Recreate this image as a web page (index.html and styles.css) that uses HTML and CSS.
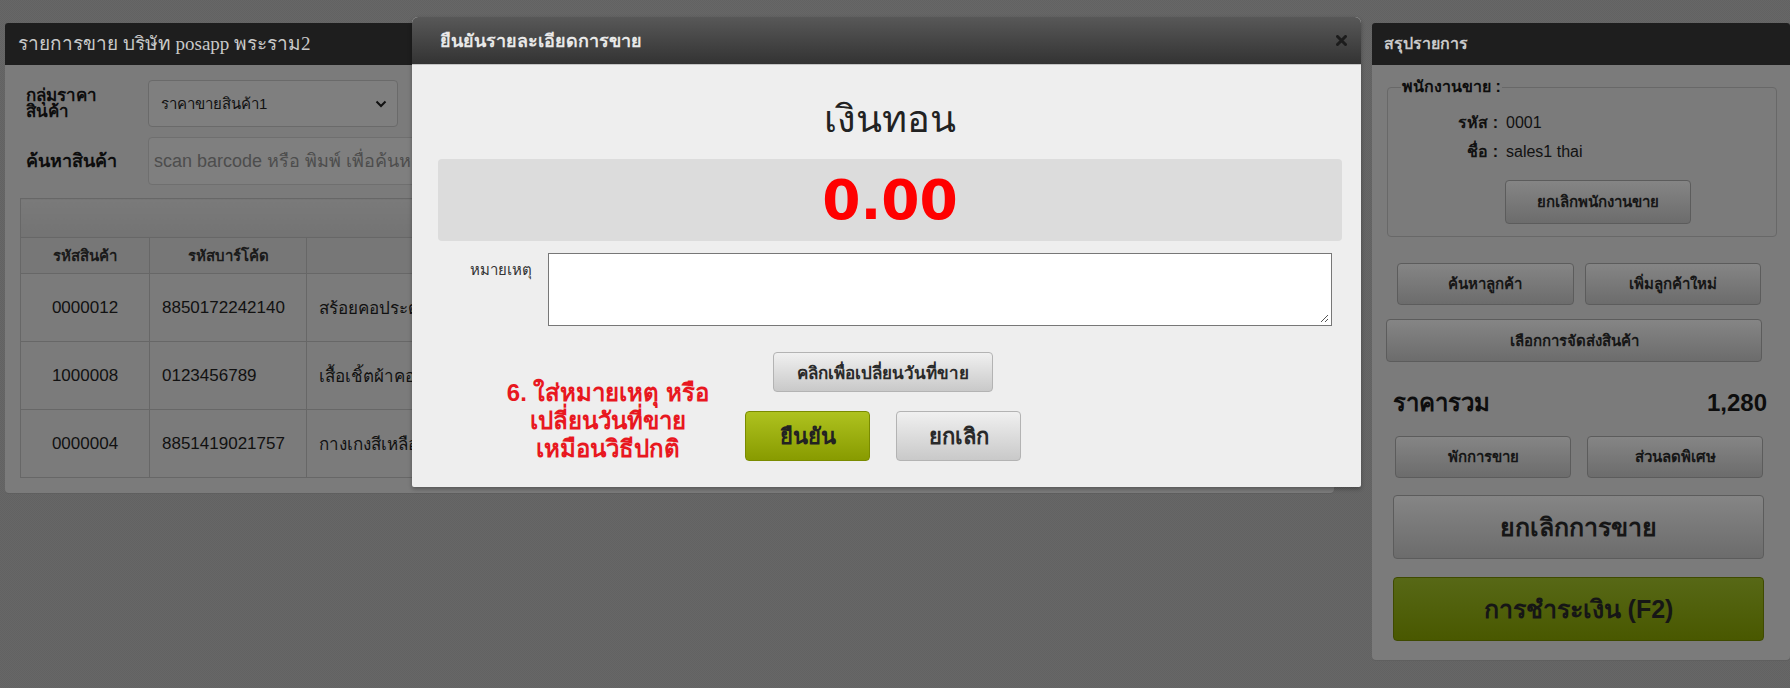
FILE: index.html
```html
<!DOCTYPE html>
<html lang="th">
<head>
<meta charset="utf-8">
<title>POS</title>
<link rel="stylesheet" href="styles.css">
</head>
<body>
<div class="page">
  <section class="panel panel-left">
    <div class="panel-head serif">รายการขาย บริษัท posapp พระราม2</div>
    <div class="panel-body">
      <div class="form-row">
        <label class="form-label">กลุ่มราคา<br>สินค้า</label>
        <div class="select">
          <span>ราคาขายสินค้า1</span>
          <svg class="chev" width="12" height="8" viewBox="0 0 12 8"><path d="M1.5 1.5 6 6l4.5-4.5" fill="none" stroke="#111" stroke-width="2"/></svg>
        </div>
      </div>
      <div class="form-row">
        <label class="form-label big">ค้นหาสินค้า</label>
        <div class="input">scan barcode หรือ พิมพ์ เพื่อค้นหาสินค้า</div>
      </div>
      <table class="grid">
        <thead>
          <tr class="cap"><th colspan="3"></th></tr>
          <tr class="heads">
            <th class="c1">รหัสสินค้า</th>
            <th class="c2">รหัสบาร์โค้ด</th>
            <th class="c3">ชื่อสินค้า</th>
          </tr>
        </thead>
        <tbody>
          <tr><td class="mid">0000012</td><td>8850172242140</td><td>สร้อยคอประดับเพชร</td></tr>
          <tr><td class="mid">1000008</td><td>0123456789</td><td>เสื้อเชิ้ตผ้าคอตตอน</td></tr>
          <tr><td class="mid">0000004</td><td>8851419021757</td><td>กางเกงสีเหลือง</td></tr>
        </tbody>
      </table>
    </div>
  </section>

  <section class="panel panel-right">
    <div class="panel-head">สรุปรายการ</div>
    <div class="panel-body right-body">
      <fieldset class="sales">
        <legend>พนักงานขาย :</legend>
        <div class="kv"><span class="k">รหัส :</span><span class="v">0001</span></div>
        <div class="kv"><span class="k">ชื่อ :</span><span class="v">sales1 thai</span></div>
        <button class="btn dim cancel-staff">ยกเลิกพนักงานขาย</button>
      </fieldset>
      <div class="pair pair1">
        <button class="btn dim">ค้นหาลูกค้า</button>
        <button class="btn dim">เพิ่มลูกค้าใหม่</button>
      </div>
      <button class="btn dim delivery">เลือกการจัดส่งสินค้า</button>
      <div class="total"><span>ราคารวม</span><span>1,280</span></div>
      <div class="pair pair2">
        <button class="btn dim">พักการขาย</button>
        <button class="btn dim">ส่วนลดพิเศษ</button>
      </div>
      <button class="btn dim huge">ยกเลิกการขาย</button>
      <button class="btn dim-green huge pay">การชำระเงิน (F2)</button>
    </div>
  </section>
</div>

<div class="modal">
  <div class="modal-head">
    <span class="modal-title">ยืนยันรายละเอียดการขาย</span>
    <svg class="close" width="11" height="11" viewBox="0 0 11 11"><path d="M1.5 1.5l8 8M9.5 1.5l-8 8" stroke="#1c1c1c" stroke-width="3" stroke-linecap="round"/></svg>
  </div>
  <div class="modal-body">
    <h2 class="change-title">เงินทอน</h2>
    <div class="change-box">0.00</div>
    <div class="note-row">
      <label class="note-label">หมายเหตุ</label>
      <div class="note-area">
        <svg class="grip" width="10" height="10" viewBox="0 0 10 10"><path d="M9 2 2 9M9 6 6 9" stroke="#555" stroke-width="1"/></svg>
      </div>
    </div>
    <div class="date-row">
      <button class="btn light date-btn">คลิกเพื่อเปลี่ยนวันที่ขาย</button>
    </div>
    <div class="action-row">
      <button class="btn green act">ยืนยัน</button>
      <button class="btn light act">ยกเลิก</button>
    </div>
    <div class="annotation">6. ใส่หมายเหตุ หรือ<br>เปลี่ยนวันที่ขาย<br>เหมือนวิธีปกติ</div>
  </div>
</div>
</body>
</html>
```

FILE: styles.css
```css
* { box-sizing: border-box; }

html, body {
  margin: 0;
  width: 1790px;
  height: 688px;
  overflow: hidden;
}

body {
  position: relative;
  font-family: "Liberation Sans", Arial, sans-serif;
  color: #111;
  background-color: #656565;
  background-image: repeating-conic-gradient(#676767 0 25%, #626262 0 50%);
  background-size: 2px 2px;
}

.page {
  display: flex;
  align-items: flex-start;
  gap: 38px;
  padding: 23px 0 0 5px;
}

.panel {
  background: #7b7b7b;
  border-radius: 3px 3px 4px 4px;
  box-shadow: 0 1px 0 #5f5f5f;
}

.panel-left { width: 1329px; }
.panel-right { width: 418px; }

.panel-head {
  height: 42px;
  line-height: 42px;
  padding-left: 12px;
  background: #1e1e1e;
  color: #c9c9c9;
  font-size: 16px;
  font-weight: bold;
  border-radius: 3px 3px 0 0;
}

.panel-head.serif {
  font-family: "Liberation Serif", "Times New Roman", serif;
  font-weight: normal;
  font-size: 19px;
  padding-left: 13px;
}

.panel-left .panel-body {
  padding: 15px 15px 15px 15px;
}

.form-row {
  display: flex;
  align-items: center;
  margin-bottom: 10px;
}

.form-row + .form-row { margin-bottom: 13px; }

.form-label {
  width: 128px;
  padding-left: 6px;
  font-weight: bold;
  font-size: 17px;
  line-height: 16px;
  color: #0d0d0d;
}

.form-label.big { font-size: 18px; }

.select {
  width: 250px;
  height: 47px;
  display: flex;
  align-items: center;
  justify-content: space-between;
  padding: 0 10px 0 12px;
  border: 1px solid #6a6a6a;
  border-radius: 4px;
  background: #7f7f7f;
  font-size: 15px;
  color: #111;
}

.input {
  width: 1170px;
  height: 48px;
  line-height: 46px;
  padding-left: 5px;
  border: 1px solid #6f6f6f;
  border-radius: 4px;
  background: #7f7f7f;
  color: #4d4d4d;
  font-size: 18px;
}

.grid {
  width: 100%;
  border-collapse: collapse;
  font-size: 17px;
}

.grid th, .grid td {
  border: 1px solid #676767;
}

.grid .cap th {
  height: 39px;
  background: linear-gradient(#7a7a7a, #737373);
}

.grid .heads th {
  height: 36px;
  background: #777777;
  font-size: 15px;
  font-weight: bold;
  color: #1a1a1a;
}

.grid .c1 { width: 129px; }
.grid .c2 { width: 157px; }

.grid td {
  height: 68px;
  color: #111;
  padding: 0 12px;
}

.grid td.mid { text-align: center; }

/* right panel */
.right-body {
  padding: 0 13px 19px 15px;
}

.sales {
  margin: 12px 0 0 0;
  padding: 14px 0 12px 0;
  border: 1px solid #686868;
  border-radius: 4px;
}

.sales legend {
  margin-left: 13px;
  padding: 0 1px;
  font-weight: bold;
  font-size: 16px;
  line-height: 20px;
  color: #0d0d0d;
}

.kv {
  display: grid;
  grid-template-columns: 110px 1fr;
  column-gap: 8px;
  height: 24px;
  line-height: 24px;
  font-size: 16px;
  margin-bottom: 5px;
}

.kv .k { text-align: right; font-weight: bold; color: #111; }
.kv .v { color: #111; }

.btn {
  display: block;
  font-family: inherit;
  font-weight: bold;
  border-radius: 4px;
  cursor: pointer;
  padding: 0;
}

.btn.dim {
  background: linear-gradient(#858585, #6c6c6c);
  border: 1px solid #5c5c5c;
  color: #161616;
  font-size: 15px;
}

.btn.dim-green {
  background: linear-gradient(#576816, #495800);
  border: 1px solid #3f4a00;
  color: #161616;
}

.cancel-staff {
  width: 186px;
  height: 44px;
  margin: 16px 0 0 117px;
  font-size: 17px;
}

.pair {
  display: flex;
}

.pair1 {
  margin: 26px 16px 0 10px;
  gap: 11px;
}

.pair .btn { flex: 1; height: 42px; }

.delivery {
  width: 376px;
  height: 43px;
  margin: 14px 0 0 -1px;
}

.total {
  display: flex;
  justify-content: space-between;
  margin: 26px 10px 0 6px;
  height: 30px;
  line-height: 30px;
  font-size: 24px;
  font-weight: bold;
  color: #0d0d0d;
}

.pair2 {
  margin: 18px 14px 0 8px;
  gap: 16px;
}

.btn.huge {
  width: 371px;
  height: 64px;
  margin: 17px 0 0 6px;
  font-size: 25px;
}

.btn.huge.pay { margin-top: 18px; }

/* modal */
.modal {
  position: absolute;
  left: 412px;
  top: 17px;
  width: 949px;
  height: 470px;
  background: #eeeeee;
  border-radius: 6px 6px 2px 2px;
  box-shadow: 0 2px 4px rgba(0,0,0,0.3);
  overflow: hidden;
}

.modal-head {
  height: 48px;
  display: flex;
  align-items: center;
  justify-content: space-between;
  padding: 0 14px 0 28px;
  background: linear-gradient(#585858, #333333);
  border-bottom: 1px solid #c4c4c4;
}

.modal-title {
  color: #e8e8e8;
  font-weight: bold;
  font-size: 18px;
}

.modal-body {
  position: relative;
  padding: 29px 19px 25px 26px;
}

.change-title {
  margin: 0;
  height: 50px;
  line-height: 50px;
  text-align: center;
  font-size: 38px;
  font-weight: normal;
  color: #222;
  font-family: "DejaVu Sans", sans-serif;
}

.change-box {
  margin-top: 15px;
  height: 82px;
  line-height: 82px;
  background: #dcdcdc;
  border-radius: 4px;
  text-align: center;
  color: #ff0000;
  font-family: "DejaVu Sans", sans-serif;
  font-weight: bold;
  font-size: 55px;
}

.note-row {
  display: grid;
  grid-template-columns: 94px 1fr;
  column-gap: 16px;
  margin: 12px 10px 0 0;
}

.note-label {
  text-align: right;
  padding-top: 5px;
  font-size: 15px;
  color: #333;
}

.note-area {
  position: relative;
  height: 73px;
  background: #fff;
  border: 1px solid #777;
}

.grip {
  position: absolute;
  right: 2px;
  bottom: 2px;
}

.date-row {
  display: flex;
  justify-content: center;
  margin-top: 26px;
}

.btn.light {
  background: linear-gradient(#f0f0f0, #c9c9c9);
  border: 1px solid #b3b3b3;
  color: #2a2a2a;
}

.btn.green {
  background: linear-gradient(#aec21f, #889b00);
  border: 1px solid #7a8b00;
  color: #222;
}

.date-btn {
  width: 220px;
  height: 40px;
  font-size: 17px;
  margin-left: -14px;
}

.action-row {
  display: flex;
  justify-content: center;
  gap: 26px;
  margin-top: 19px;
  margin-left: -14px;
}

.act {
  width: 125px;
  height: 50px;
  font-size: 22px;
}

.annotation {
  position: absolute;
  left: 61px;
  top: 314px;
  width: 270px;
  text-align: center;
  color: #e8181f;
  font-weight: bold;
  font-size: 24px;
  line-height: 28px;
}
```
